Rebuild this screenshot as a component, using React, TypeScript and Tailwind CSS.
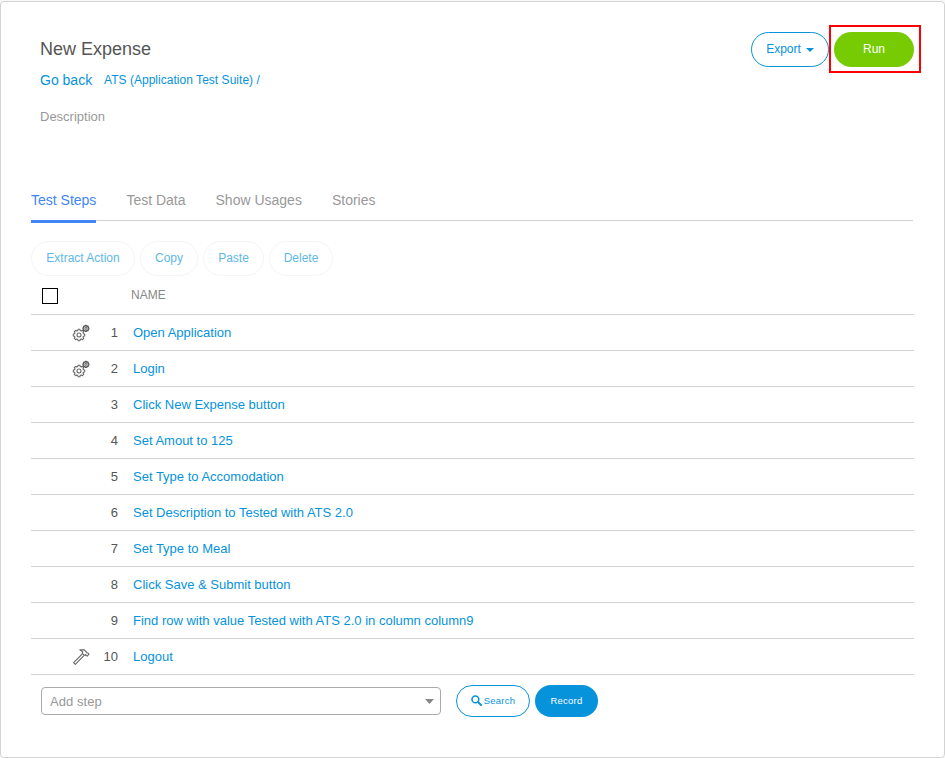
import React from "react";

type StepIcon = "gears" | "hammer" | null;

const steps: { name: string; icon: StepIcon }[] = [
  { name: "Open Application", icon: "gears" },
  { name: "Login", icon: "gears" },
  { name: "Click New Expense button", icon: null },
  { name: "Set Amout to 125", icon: null },
  { name: "Set Type to Accomodation", icon: null },
  { name: "Set Description to Tested with ATS 2.0", icon: null },
  { name: "Set Type to Meal", icon: null },
  { name: "Click Save & Submit button", icon: null },
  { name: "Find row with value Tested with ATS 2.0 in column column9", icon: null },
  { name: "Logout", icon: "hammer" },
];

const gearPath = (cx: number, cy: number, inner: number, outer: number) => {
  const points: string[] = [];
  for (let i = 0; i < 8; i++) {
    const base = (i * Math.PI) / 4;
    [
      [-0.27, inner],
      [-0.17, outer],
      [0.17, outer],
      [0.27, inner],
    ].forEach(([a, r]) => {
      points.push(`${(cx + r * Math.cos(base + a)).toFixed(2)} ${(cy + r * Math.sin(base + a)).toFixed(2)}`);
    });
  }
  return `M${points.join("L")}Z`;
};

function GearsIcon() {
  return (
    <svg width="18" height="18" viewBox="0 0 18 18" fill="none" stroke="#666" strokeLinejoin="round">
      <path d={gearPath(7, 11, 4.6, 5.8)} strokeWidth="1.05" />
      <circle cx="7" cy="11" r="2" strokeWidth="1.05" />
      <path d={gearPath(13.9, 4.4, 2.4, 3)} stroke="#555" strokeWidth="1.2" />
      <circle cx="13.9" cy="4.4" r="1" stroke="#555" strokeWidth="1" />
    </svg>
  );
}

function HammerIcon() {
  return (
    <svg width="18" height="18" viewBox="0 0 18 18" fill="none" stroke="#666" strokeWidth="1.1" strokeLinejoin="round">
      <path d="M10.4 5.8L1.6 14.6L3.3 16.3L12.2 7.4" />
      <path d="M7.8 1.9L12.3 1.9L15.3 5L16.4 5.2L17 6.2L15.2 8.1L14 7.6L13.8 6.5L12.6 7.4L10.2 5.3L10.8 3.9Z" />
    </svg>
  );
}

const tabs = ["Test Data", "Show Usages", "Stories"];
const actions = [
  { label: "Extract Action", width: "w-[104px]" },
  { label: "Copy", width: "w-[58px]" },
  { label: "Paste", width: "w-[61px]" },
  { label: "Delete", width: "w-[64px]" },
];

export default function App() {
  return (
    <div className="h-[758px] w-[945px] bg-[#f8f8f8] pt-px font-['Liberation_Sans',Arial,sans-serif]">
      <main className="flex h-[757px] flex-col rounded border border-[#d3d3d3] bg-white pl-[30px]">
        <header className="flex h-[160px] justify-between pl-[9px] pr-[23px]">
          <div>
            <h1 className="mt-[35px] text-[18px] leading-6 text-[#555]">New Expense</h1>
            <div className="mt-[10px] flex h-[18px] items-center text-[#0693dc]">
              <a className="w-[64px] text-[14px] leading-[18px]">Go back</a>
              <a className="text-[12px] leading-[18px] tracking-[0.03px]">ATS (Application Test Suite) /</a>
            </div>
            <p className="mt-[18px] text-[13px] leading-[20px] text-[#999]">Description</p>
          </div>
          <div className="mt-[23px] flex h-12 items-center">
            <button className="flex h-[35px] w-[78px] items-center justify-center gap-[5px] rounded-full border border-[#0693dc] text-[12px] text-[#0693dc]">
              Export
              <svg className="mt-px" width="8" height="4" viewBox="0 0 8 4">
                <path d="M0 0H8L4 4Z" fill="#0693dc" />
              </svg>
            </button>
            <div className="flex h-12 w-[92px] items-center border-2 border-[#f00] pl-[3px]">
              <button className="h-[35px] w-20 rounded-full bg-[#76cb02] text-[12px] font-normal text-white">Run</button>
            </div>
          </div>
        </header>

        <nav className="mt-[21px] flex h-[40px] w-[882px] items-start gap-[30px] text-[14px] leading-[34px] text-[#999]">
          <a className="h-[40px] shrink-0 border-b-[3px] border-[#4285f4] text-[#4285f4]">Test Steps</a>
          <div className="-ml-[30px] flex h-[38px] grow gap-[30px] border-b border-[#d3d3d3] pl-[30px]">
            {tabs.map((tab) => (
              <a key={tab}>{tab}</a>
            ))}
          </div>
        </nav>

        <div className="mt-[18px] flex h-[35px] gap-[5px]">
          {actions.map(({ label, width }) => (
            <button key={label} className={`${width} h-[35px] rounded-full border border-[#f5f5f5] pb-px text-[12px] text-[#5db8e7]`}>
              {label}
            </button>
          ))}
        </div>

        <div className="flex h-[39px] w-[883px] shrink-0 border-b border-[#d3d3d3] pl-[11px]">
          <span className="mt-[12px] size-4 border border-black bg-white" />
          <span className="ml-[73px] mt-[10px] text-[12px] leading-[18px] text-[#888]">NAME</span>
        </div>
        {steps.map(({ name, icon }, index) => (
          <div key={name} className="flex h-9 w-[883px] shrink-0 items-center border-b border-[#d3d3d3] text-[13px]">
            <span className="ml-[41px] w-[18px]">
              {icon === "gears" && <GearsIcon />}
              {icon === "hammer" && <HammerIcon />}
            </span>
            <span className="w-[28px] text-right text-[#555]">{index + 1}</span>
            <a className="ml-[15px] text-[#0693dc]">{name}</a>
          </div>
        ))}

        <div className="mt-[10px] flex h-8 items-center pl-[10px]">
          <div className="flex h-[28px] w-[400px] items-center justify-between rounded border border-[#aaa] pl-2 pr-[6px] text-[13px] tracking-[0.05px] text-[#999]">
            <span className="pt-[2px]">Add step</span>
            <svg width="9" height="5" viewBox="0 0 9 5">
              <path d="M0 0H9L4.5 5Z" fill="#888" />
            </svg>
          </div>
          <button className="ml-[15px] flex h-8 w-[74px] items-center justify-center gap-[2px] rounded-full border border-[#0693dc] text-[9.5px] tracking-[0.22px] text-[#0693dc]">
            <svg className="mb-[2px]" width="11" height="11" viewBox="0 0 11 11" fill="none" stroke="#0693dc">
              <circle cx="4.4" cy="4.4" r="3.4" strokeWidth="1.6" />
              <path d="M7 7L10 10" strokeWidth="2" strokeLinecap="round" />
            </svg>
            Search
          </button>
          <button className="ml-[5px] h-8 w-[63px] rounded-full bg-[#0693dc] text-[9.5px] tracking-[0.22px] text-white">Record</button>
        </div>
      </main>
    </div>
  );
}
